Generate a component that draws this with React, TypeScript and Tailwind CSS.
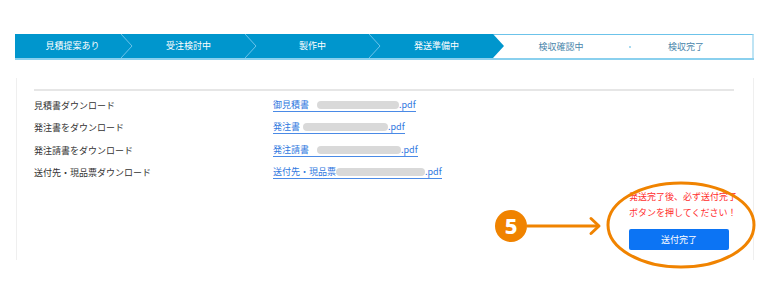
import { FC } from 'react';

const font = { fontFamily: '"Noto Sans CJK JP", "Noto Sans", sans-serif' };

const Chevron: FC = () => (
    <svg className="absolute left-0 top-0" width="12" height="24" viewBox="0 0 12 24">
        <polyline points="0,0 11,12 0,24" fill="none" stroke="#6cc3ea" strokeWidth="1" />
    </svg>
);

const StepBar: FC = () => {
    return (
        <div className="flex h-[26px] border-b-2 border-[#8ad0ee] text-[9px]">
            <div className="w-[106px] h-[24px] bg-[#0096cd] text-white flex items-center justify-center pl-[9px]">
                見積提案あり
            </div>
            <div className="relative w-[124px] h-[24px] bg-[#0096cd] text-white flex items-center justify-center pl-[11px]">
                <Chevron />
                受注検討中
            </div>
            <div className="relative w-[124px] h-[24px] bg-[#0096cd] text-white flex items-center justify-center pl-[11px]">
                <Chevron />
                製作中
            </div>
            <div className="relative w-[124px] h-[24px] bg-[#0096cd] text-white flex items-center justify-center pl-[11px]">
                <Chevron />
                発送準備中
            </div>
            <div className="relative w-[125px] h-[24px] border-t border-[#6cc3ea] text-[#4a86ab] flex items-center justify-center pl-[11px]">
                <svg className="absolute left-0 top-[-1px]" width="12" height="24" viewBox="0 0 12 24">
                    <polygon points="0,0 11,12 0,24" fill="#0096cd" />
                </svg>
                検収確認中
            </div>
            <div className="relative flex-1 h-[24px] border-t border-r-2 border-[#6cc3ea] border-r-[#bfe4f4] text-[#4a86ab] flex items-center justify-center pl-[11px] pr-[9px]">
                <span className="absolute left-[11px] top-[11px] w-[2px] h-[2px] bg-[#a8daf0]" />
                検収完了
            </div>
        </div>
    );
};

const Blob: FC<{ w: number }> = ({ w }) => (
    <span className="inline-block h-[8px] rounded-full bg-[#d9d9d9]" style={{ width: w }} />
);

const rows = [
    { label: '見積書ダウンロード', name: '御見積書', gap: 8, blob: 82 },
    { label: '発注書をダウンロード', name: '発注書', gap: 3, blob: 85 },
    { label: '発注請書をダウンロード', name: '発注請書', gap: 8, blob: 84 },
    { label: '送付先・現品票ダウンロード', name: '送付先・現品票', gap: 0, blob: 89 },
];

const App: FC = () => {
    return (
        <div className="relative w-[770px] h-[300px] bg-white overflow-hidden pt-[34px]" style={font}>
            <div className="pl-[15px] pr-[16px]">
                <StepBar />
            </div>

            <div className="ml-[16px] w-[738px] mt-[18px] border-l border-r border-[#efefef] pl-[17px] pr-[10px] pt-[11px] pb-[10px]">
                <div className="h-[2px] bg-[#e6e6e6] mr-[9px]" />
                <div className="mt-[3px] flex flex-col text-[9px]">
                    {rows.map((r) => (
                        <div key={r.label} className="h-[22.5px] flex items-center">
                            <span className="w-[239px] text-[#333333]">{r.label}</span>
                            <span className="text-[#2f78e0] flex items-center leading-[12px] border-b border-[#4a8ae6]">
                                {r.name}
                                <span style={{ width: r.gap }} />
                                <Blob w={r.blob} />
                                .pdf
                            </span>
                        </div>
                    ))}
                </div>
                <div className="flex justify-end mt-[5px]">
                    <div className="w-[114px]">
                        <div className="text-[9px] leading-[16px] text-[#ff2d2d] whitespace-nowrap">
                            <div>発送完了後、必ず送付完了</div>
                            <div>ボタンを押してください！</div>
                        </div>
                        <button className="mt-[8px] w-[100px] h-[21px] rounded-[2px] bg-[#0c74f4] text-white text-[9px] flex items-center justify-center">
                            送付完了
                        </button>
                    </div>
                </div>
            </div>

            <svg className="absolute left-0 top-0 pointer-events-none" width="770" height="300" viewBox="0 0 770 300">
                <ellipse cx="681" cy="225" rx="73" ry="42" fill="none" stroke="#f08300" strokeWidth="3" />
                <circle cx="511" cy="226" r="16" fill="#f08300" />
                <text x="511" y="233.5" textAnchor="middle" fill="#ffffff" fontSize="22" fontWeight="800" fontFamily="'Noto Sans', 'DejaVu Sans', sans-serif">5</text>
                <line x1="527" y1="226" x2="598" y2="226" stroke="#f08300" strokeWidth="3" />
                <polyline points="591,218.5 599,226 591,233.5" fill="none" stroke="#f08300" strokeWidth="3" strokeLinecap="round" strokeLinejoin="round" />
            </svg>
        </div>
    );
};

export default App;
